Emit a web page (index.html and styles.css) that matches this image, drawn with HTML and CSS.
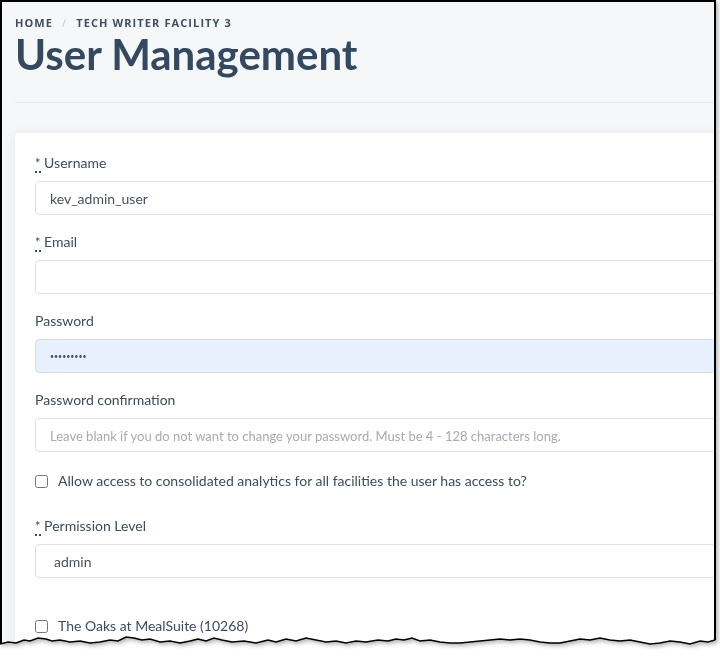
FILE: index.html
```html
<!DOCTYPE html>
<html lang="en">
<head>
  <meta charset="UTF-8">
  <title>User Management</title>
  <link rel="stylesheet" href="styles.css">
</head>
<body>

  <div class="frame">
    <div class="shot">

      <!-- Page header -->
      <div class="page-header">
        <div class="breadcrumb">
          <span>Home</span>
          <span class="sep">/</span>
          <span>Tech Writer Facility 3</span>
        </div>
        <h1>User Management</h1>
      </div>

      <!-- User form -->
      <div class="card">
        <form id="userForm">
          <div class="field">
            <label for="username"><abbr title="required">*</abbr> Username</label>
            <input type="text" id="username" value="kev_admin_user">
          </div>

          <div class="field">
            <label for="email"><abbr title="required">*</abbr> Email</label>
            <input type="email" id="email">
          </div>

          <div class="field">
            <label for="password">Password</label>
            <input type="password" id="password" class="autofill" value="secret123">
          </div>

          <div class="field">
            <label for="confirm">Password confirmation</label>
            <input type="password" id="confirm" placeholder="Leave blank if you do not want to change your password. Must be 4 - 128 characters long.">
          </div>

          <div class="check">
            <input type="checkbox" id="analytics">
            <label for="analytics">Allow access to consolidated analytics for all facilities the user has access to?</label>
          </div>

          <div class="field">
            <label for="level"><abbr title="required">*</abbr> Permission Level</label>
            <select id="level">
              <option>admin</option>
              <option>user</option>
            </select>
          </div>

          <div class="check facility">
            <input type="checkbox" id="f10268">
            <label for="f10268">The Oaks at MealSuite (10268)</label>
          </div>
        </form>
      </div>

    </div>

    <!-- torn bottom edge -->
    <svg class="tear" width="716" height="656" viewBox="0 0 716 656">
      <polyline points="0,644 8,642 16,643 24,640 30,641 38,638 46,639 52,641 60,640 70,642 80,641 90,643 100,642 110,640 118,641 126,637 134,638 142,640 150,639 160,642 170,641 180,643 190,641 198,639 206,641 214,638 222,640 232,642 244,641 256,643 268,640 276,642 286,639 296,641 306,638 316,640 326,642 336,641 346,643 356,641 366,642 378,640 388,641 396,639 404,640 412,638 420,641 430,640 440,642 450,643 460,643 470,642 480,641 490,640 500,639 510,640 520,639 530,640 540,642 550,643 560,643 570,641 580,639 590,640 600,638 610,640 620,641 630,640 640,642 650,644 660,643 670,641 680,642 690,644 700,641 708,642 715,640" fill="none" stroke="#000" stroke-width="1.5"/>
    </svg>
  </div>

</body>
</html>
```

FILE: styles.css
```css
body {
  margin: 0;
  background-color: #fff;
  font-family: Lato, "Liberation Sans", sans-serif;
}

.frame {
  position: relative;
  width: 716px;
  height: 656px;
  filter: drop-shadow(2px 2px 2px rgba(0, 0, 0, 0.3));
}

.shot {
  box-sizing: border-box;
  width: 716px;
  height: 656px;
  border: 2px solid #000;
  border-bottom: none;
  background-color: #f6f7f9;
  overflow: hidden;
  padding-left: 13px;
  clip-path: polygon(0 0, 716px 0, 716px 640px, 708px 642px, 700px 641px, 690px 644px, 680px 642px, 670px 641px, 660px 643px, 650px 644px, 640px 642px, 630px 640px, 620px 641px, 610px 640px, 600px 638px, 590px 640px, 580px 639px, 570px 641px, 560px 643px, 550px 643px, 540px 642px, 530px 640px, 520px 639px, 510px 640px, 500px 639px, 490px 640px, 480px 641px, 470px 642px, 460px 643px, 450px 643px, 440px 642px, 430px 640px, 420px 641px, 412px 638px, 404px 640px, 396px 639px, 388px 641px, 378px 640px, 366px 642px, 356px 641px, 346px 643px, 336px 641px, 326px 642px, 316px 640px, 306px 638px, 296px 641px, 286px 639px, 276px 642px, 268px 640px, 256px 643px, 244px 641px, 232px 642px, 222px 640px, 214px 638px, 206px 641px, 198px 639px, 190px 641px, 180px 643px, 170px 641px, 160px 642px, 150px 639px, 142px 640px, 134px 638px, 126px 637px, 118px 641px, 110px 640px, 100px 642px, 90px 643px, 80px 641px, 70px 642px, 60px 640px, 52px 641px, 46px 639px, 38px 638px, 30px 641px, 24px 640px, 16px 643px, 8px 642px, 0 644px);
}

.tear {
  position: absolute;
  top: 0;
  left: 0;
  pointer-events: none;
}

/* header */

.page-header {
  padding-top: 14px;
  padding-bottom: 26px;
  border-bottom: 1px solid #e7e9ec;
}

.breadcrumb {
  font-family: "Open Sans", sans-serif;
  font-size: 11px;
  font-weight: 700;
  letter-spacing: 1.1px;
  text-transform: uppercase;
  color: #3e4e61;
  line-height: 14px;
}

.breadcrumb .sep {
  color: #c6ccd3;
  font-weight: 400;
  margin: 0 5px;
}

h1 {
  margin: 2px 0 0;
  font-size: 42px;
  font-weight: 700;
  line-height: 44px;
  color: #34495f;
}

/* card */

.card {
  margin-top: 30px;
  background-color: #fff;
  border-radius: 4px 0 0 0;
  box-shadow: 0 0 12px rgba(30, 45, 60, 0.08);
  padding: 20px 0 0 20px;
  height: 600px;
}

.field {
  margin-bottom: 17px;
}

.field label {
  display: block;
  font-size: 14px;
  line-height: 20px;
  color: #3d4c5e;
  margin-bottom: 8px;
}

abbr {
  text-decoration: none;
  border-bottom: 2px dotted #3d4c5e;
  font-size: 13px;
}

input[type="text"], input[type="email"], input[type="password"], select {
  box-sizing: border-box;
  display: block;
  width: 720px;
  height: 34px;
  padding: 0 14px;
  border: 1px solid #dde1e6;
  border-radius: 4px;
  background-color: #fff;
  font-family: Lato, sans-serif;
  font-size: 14px;
  color: #48525d;
  outline: none;
}

input::placeholder {
  color: #a4abb4;
  font-size: 13px;
}

input.autofill {
  background-color: #e8f0fe;
  border-color: #d9dfe6;
  font-size: 7px;
  letter-spacing: 0;
}

select {
  appearance: none;
  padding-left: 18px;
}

.check {
  display: flex;
  align-items: center;
  gap: 10px;
  margin-top: 19px;
  margin-bottom: 25px;
}

.check input {
  margin: 0;
  width: 13px;
  height: 13px;
}

.check label {
  font-size: 14px;
  line-height: 20px;
  color: #3d4c5e;
}

.facility {
  margin-top: 38px;
}
```
